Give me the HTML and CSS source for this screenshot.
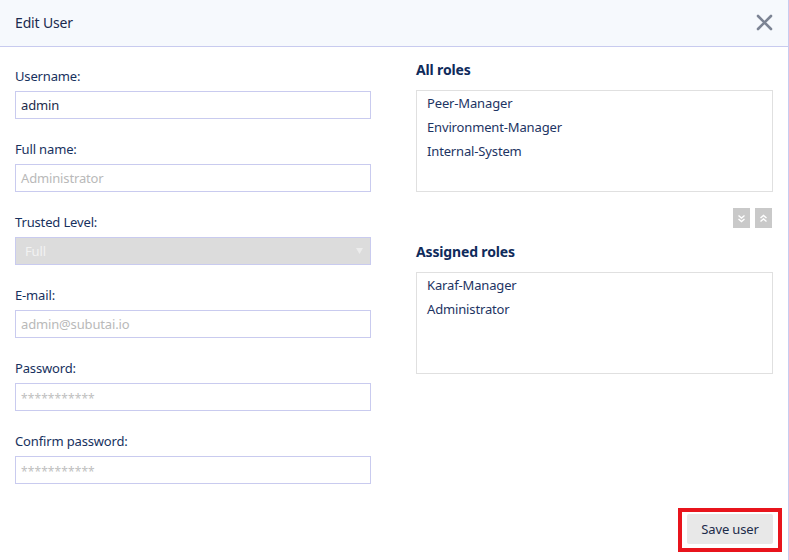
FILE: index.html
```html
<!DOCTYPE html>
<html>
<head>
<meta charset="utf-8">
<link rel="stylesheet" href="styles.css">
</head>
<body>
<div class="modal">
  <div class="modal-header">
    <span class="modal-title">Edit User</span>
    <button class="close" aria-label="Close">
      <svg width="17" height="17" viewBox="0 0 17 17"><path d="M2 2 L15 15 M15 2 L2 15" stroke="#7c8494" stroke-width="2.6" stroke-linecap="round"/></svg>
    </button>
  </div>
  <div class="modal-body">
    <div class="col-left">
      <div class="group">
        <label class="label">Username:</label>
        <div class="input"><span class="value">admin</span></div>
      </div>
      <div class="group">
        <label class="label">Full name:</label>
        <div class="input"><span class="ph">Administrator</span></div>
      </div>
      <div class="group">
        <label class="label">Trusted Level:</label>
        <div class="input select"><span class="sel-text">Full</span><svg class="caret" width="7" height="6" viewBox="0 0 7 6"><path d="M0 0 H7 L3.5 6 Z" fill="#ececec"/></svg></div>
      </div>
      <div class="group">
        <label class="label">E-mail:</label>
        <div class="input"><span class="ph">admin@subutai.io</span></div>
      </div>
      <div class="group">
        <label class="label">Password:</label>
        <div class="input"><span class="ph stars">***********</span></div>
      </div>
      <div class="group">
        <label class="label">Confirm password:</label>
        <div class="input"><span class="ph stars">***********</span></div>
      </div>
    </div>
    <div class="col-right">
      <h3 class="heading">All roles</h3>
      <ul class="roles">
        <li>Peer-Manager</li>
        <li>Environment-Manager</li>
        <li>Internal-System</li>
      </ul>
      <div class="movers">
        <button class="mover" aria-label="Move down">
          <svg width="9" height="9" viewBox="0 0 9 9"><path d="M1.5 1.5 L4.5 4 L7.5 1.5 M1.5 5 L4.5 7.5 L7.5 5" fill="none" stroke="#fff" stroke-width="1.4"/></svg>
        </button>
        <button class="mover" aria-label="Move up">
          <svg width="9" height="9" viewBox="0 0 9 9"><path d="M1.5 4 L4.5 1.5 L7.5 4 M1.5 7.5 L4.5 5 L7.5 7.5" fill="none" stroke="#fff" stroke-width="1.4"/></svg>
        </button>
      </div>
      <h3 class="heading heading-2">Assigned roles</h3>
      <ul class="roles">
        <li>Karaf-Manager</li>
        <li>Administrator</li>
      </ul>
    </div>
  </div>
  <div class="modal-footer">
    <div class="highlight">
      <button class="save">Save user</button>
    </div>
  </div>
</div>
</body>
</html>
```

FILE: styles.css
```css
* { box-sizing: border-box; }
html, body { margin: 0; padding: 0; background: #fff; }
body {
  font-family: "Noto Sans", "Open Sans", sans-serif;
  font-size: 13px;
  color: #17315e;
  letter-spacing: -0.15px;
}
.modal {
  width: 789px;
  height: 560px;
  border-right: 1px solid #c8cbef;
}
.modal-header {
  height: 47px;
  background: #f6f9fd;
  border-bottom: 1px solid #c8cbef;
  display: flex;
  align-items: center;
  justify-content: space-between;
  padding: 0 14px 2px 15px;
}
.modal-title {
  font-size: 14px;
  color: #1b2a4e;
}
.close {
  border: 0;
  background: transparent;
  padding: 0;
  width: 19px;
  height: 19px;
  display: flex;
  align-items: center;
  justify-content: center;
  cursor: pointer;
}
.modal-body {
  display: grid;
  grid-template-columns: 356px 357px;
  column-gap: 45px;
  padding: 21px 0 0 15px;
}
.group { margin-bottom: 22px; }
.label {
  display: block;
  line-height: 17px;
  height: 17px;
  margin-bottom: 6px;
  color: #17315e;
}
.input {
  height: 28px;
  border: 1px solid #c9cbef;
  display: flex;
  align-items: center;
  padding: 0 5px;
  background: #fff;
}
.value { color: #1c2b4a; }
.ph { color: #b9b9b9; }
.stars { font-size: 12px; letter-spacing: 0.1px; padding-top: 3px; color: #c0c0c0; }
.select {
  background: #dcdcdc;
  justify-content: space-between;
  padding: 0 7px 0 9px;
}
.sel-text { color: #f2f2f2; }
.caret { display: block; }
.heading {
  margin: 0;
  font-size: 14px;
  font-weight: 700;
  color: #0f2b5b;
  line-height: 18px;
  margin-bottom: 11px;
  margin-top: -7px;
}
.heading-2 { margin-top: 15px; margin-bottom: 11px; }
.roles {
  list-style: none;
  margin: 0;
  padding: 0 10px;
  height: 102px;
  border: 1px solid #e0e0e0;
}
.roles li {
  line-height: 24px;
  color: #1d3463;
}
.movers {
  display: flex;
  justify-content: flex-end;
  gap: 5px;
  margin-top: 16px;
  padding-right: 1px;
}
.mover {
  width: 17px;
  height: 20px;
  border: 0;
  padding: 0;
  background: #c9c9c9;
  display: flex;
  align-items: center;
  justify-content: center;
}
.modal-footer {
  display: flex;
  justify-content: flex-end;
  padding: 2px 6px 0 0;
}
.highlight {
  border: 4px solid #e8141c;
  padding: 2px 5px 4px 5px;
}
.save {
  width: 86px;
  height: 30px;
  border: 0;
  background: #e8e8e8;
  border-radius: 2px;
  font-family: inherit;
  font-size: 13px;
  letter-spacing: inherit;
  color: #1c2b4a;
  padding: 0;
}
```
